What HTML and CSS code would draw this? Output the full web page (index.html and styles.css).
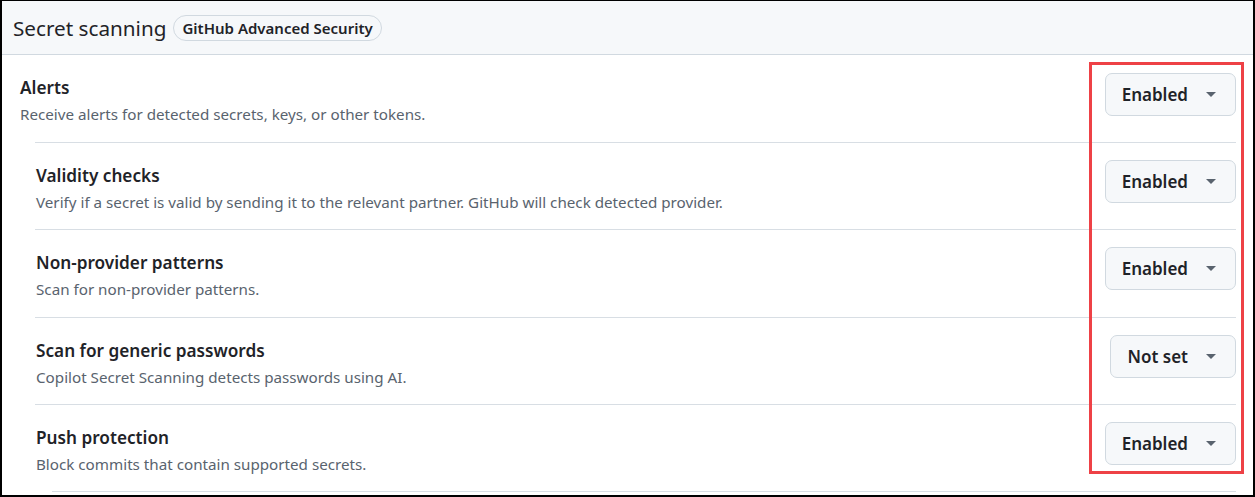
FILE: index.html
```html
<!DOCTYPE html>
<html lang="en">
<head>
<meta charset="utf-8">
<title>Secret scanning</title>
<link rel="stylesheet" href="styles.css">
</head>
<body>
<div class="frame">
  <div class="header">
    <h2 class="header-title">Secret scanning</h2>
    <span class="pill">GitHub Advanced Security</span>
  </div>
  <div class="content">
    <div class="row">
      <div class="text">
        <div class="title">Alerts</div>
        <div class="desc">Receive alerts for detected secrets, keys, or other tokens.</div>
      </div>
      <button class="select">Enabled<span class="caret"></span></button>
    </div>
    <div class="nested">
      <div class="row sub">
        <div class="text">
          <div class="title">Validity checks</div>
          <div class="desc">Verify if a secret is valid by sending it to the relevant partner. GitHub will check detected provider.</div>
        </div>
        <button class="select">Enabled<span class="caret"></span></button>
      </div>
      <div class="row sub">
        <div class="text">
          <div class="title">Non-provider patterns</div>
          <div class="desc">Scan for non-provider patterns.</div>
        </div>
        <button class="select">Enabled<span class="caret"></span></button>
      </div>
      <div class="row sub">
        <div class="text">
          <div class="title">Scan for generic passwords</div>
          <div class="desc">Copilot Secret Scanning detects passwords using AI.</div>
        </div>
        <button class="select">Not set<span class="caret"></span></button>
      </div>
      <div class="row sub">
        <div class="text">
          <div class="title">Push protection</div>
          <div class="desc">Block commits that contain supported secrets.</div>
        </div>
        <button class="select">Enabled<span class="caret"></span></button>
      </div>
      <div class="deeper"></div>
    </div>
  </div>
  <div class="highlight"></div>
</div>
</body>
</html>
```
FILE: styles.css
```css
* { box-sizing: border-box; }
html, body { margin: 0; padding: 0; background: #fff; }
body {
  font-family: "Noto Sans", "Open Sans", sans-serif;
  color: #1f2328;
}
.frame {
  position: relative;
  width: 1255px;
  height: 497px;
  border: 2px solid #000;
  border-top-width: 1px;
  overflow: hidden;
}
.header {
  height: 54px;
  background: #f6f8fa;
  border-bottom: 1px solid #d1d9e0;
  display: flex;
  align-items: center;
  gap: 7px;
  padding-left: 11px;
}
.header-title {
  margin: 0;
  font-size: 20.7px;
  font-weight: 400;
  line-height: 26px;
}
.pill {
  height: 26px;
  border: 1px solid #d1d9e0;
  border-radius: 13px;
  padding: 0 8px;
  font-size: 15px;
  font-weight: 600;
  line-height: 24px;
}
.content {
  padding: 0 17px 0 18px;
}
.row {
  display: flex;
  justify-content: space-between;
  align-items: flex-start;
  height: 87px;
}
.nested {
  margin-left: 15px;
}
.row.sub {
  height: 87.3px;
  border-top: 1px solid #d8dee4;
  padding-left: 1px;
}
.text {
  padding-top: 20px;
}
.title {
  font-size: 17.2px;
  font-weight: 600;
  line-height: 26px;
}
.desc {
  margin-top: 1px;
  font-size: 15.2px;
  line-height: 24px;
  color: #59636e;
}
.select {
  display: flex;
  align-items: center;
  height: 43px;
  margin-top: 18px;
  padding: 0 19px 0 16px;
  background: #f6f8fa;
  border: 1px solid #d1d9e0;
  border-radius: 7px;
  font-family: inherit;
  font-size: 17px;
  font-weight: 600;
  color: #1f2328;
}
.sub .select {
  margin-top: 17px;
}
.caret {
  width: 0;
  height: 0;
  margin-left: 18px;
  border-left: 5px solid transparent;
  border-right: 5px solid transparent;
  border-top: 5px solid #59636e;
}
.deeper {
  margin-left: 17px;
  border-top: 1px solid #d8dee4;
  height: 10px;
}
.highlight {
  position: absolute;
  left: 1087px;
  top: 61px;
  width: 155px;
  height: 412px;
  border: 3px solid #ee4146;
}
```
